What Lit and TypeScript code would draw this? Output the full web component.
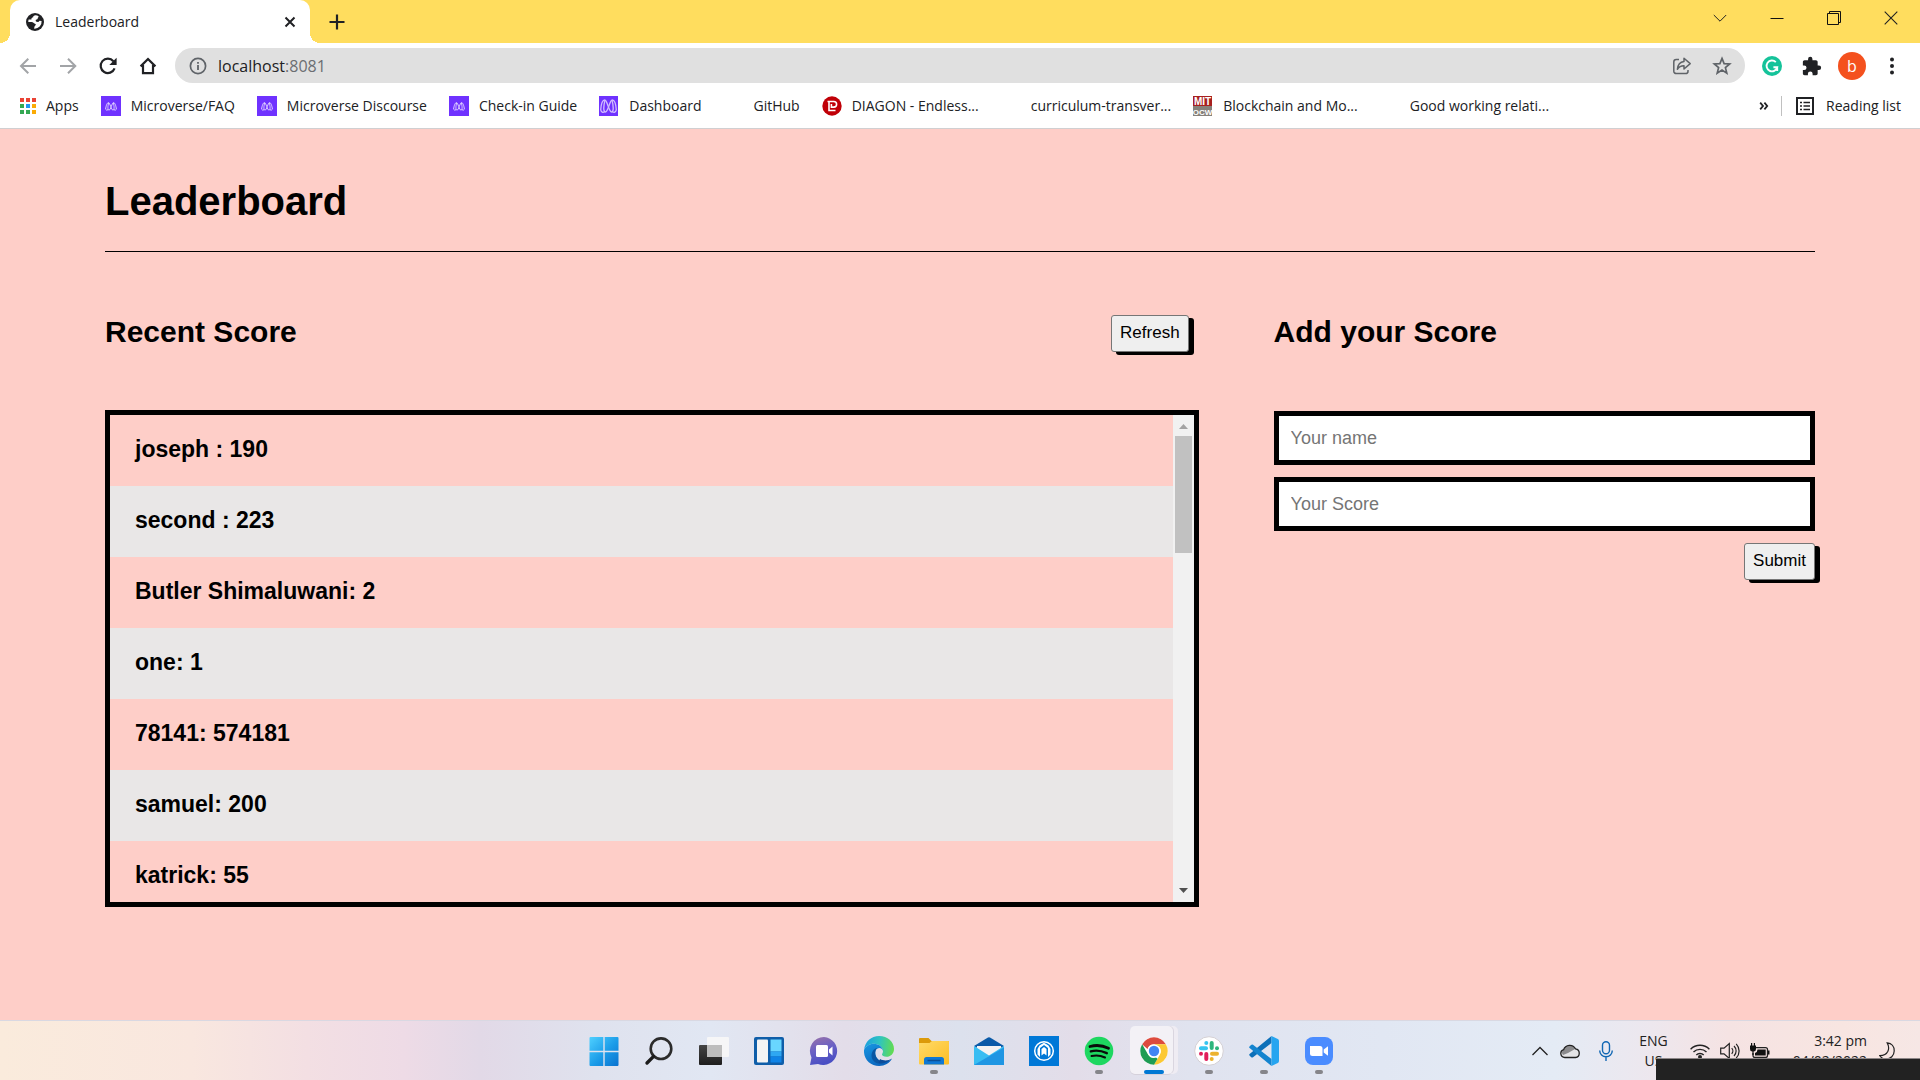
import { LitElement, html, css, svg, nothing, TemplateResult } from "lit";
import { customElement } from "lit/decorators.js";
import { classMap } from "lit/directives/class-map.js";

const icon = (w: number, h: number, box: string, body: unknown) =>
  html`<svg width=${w} height=${h} viewBox=${box} fill="none" aria-hidden="true">${body}</svg>`;

/* ---------- browser glyphs ---------- */

const globe = icon(18, 18, "0 0 18 18", svg`
  <circle cx="9" cy="9" r="9" fill="#202124"/>
  <path d="M9.6 2.2 C8 2.3 6.9 3.2 7.2 4.3 C6 4.4 5.3 5.3 5.4 6.5 L2.6 6.6 A7 7 0 0 0 2.3 8.9 L5.6 9 C7.4 9.1 7.6 10.4 8.9 10.7 C10 10.9 10.1 11.9 9.3 12.5 C8.5 13 8.3 14 8.2 15.7 A7 7 0 0 0 15.6 8 L13.4 7.7 C12.9 9 11.8 9.1 10.6 8.8 C9.7 8.5 9.5 7.6 9.9 6.8 C11.2 6.8 11.9 6 11.8 4.8 C12.2 4.4 12.6 3.9 12.6 3.2 A7 7 0 0 0 9.6 2.2Z" fill="#fff"/>`);
const closeTab = icon(12, 12, "0 0 12 12", svg`<path d="M1.5 1.5 10.5 10.5M10.5 1.5 1.5 10.5" stroke="#202124" stroke-width="2"/>`);
const plus = icon(16, 16, "0 0 16 16", svg`<path d="M8 .5V15.5M.5 8H15.5" stroke="#202124" stroke-width="2.2"/>`);
const chevronDown = icon(14, 14, "0 0 14 14", svg`<path d="M.8 4 7 10.2 13.2 4" stroke="#222" stroke-width="1"/>`);
const minimise = icon(14, 14, "0 0 14 14", svg`<path d="M.5 7.5H13.5" stroke="#111"/>`);
const restore = icon(14, 14, "0 0 14 14", svg`<path d="M.5 2.5H11.5V13.5H.5ZM2.5 2.5V.5H13.5V11.5H11.5" stroke="#111"/>`);
const closeWin = icon(14, 14, "0 0 14 14", svg`<path d="M.7.7 13.3 13.3M13.3.7.7 13.3" stroke="#222" stroke-width="1.1"/>`);

const back = icon(20, 20, "0 0 20 20", svg`<path d="M18 10H3.5M10.3 2.8 3 10 10.3 17.2" stroke="#a2a4a7" stroke-width="2"/>`);
const forward = icon(20, 20, "0 0 20 20", svg`<path d="M2 10H17M10 2.8 17.3 10 10 17.2" stroke="#a2a4a7" stroke-width="2"/>`);
const reload = icon(20, 20, "0 0 20 20", svg`<path d="M16.6 12.4A7.2 7.2 0 1 1 15.4 5.2" stroke="#202124" stroke-width="2.2"/><path d="M18.6 1.7V9H11.3Z" fill="#202124"/>`);
const home = icon(20, 20, "0 0 20 20", svg`<path d="M2.6 10.4 10 3 17.4 10.4M5 9V17.2H15V9" stroke="#202124" stroke-width="2.2"/>`);
const info = icon(18, 18, "0 0 18 18", svg`<circle cx="9" cy="9" r="7.6" stroke="#5f6368" stroke-width="1.7"/><path d="M9 8V13M9 5V6.8" stroke="#5f6368" stroke-width="1.8"/>`);
const share = icon(20, 20, "0 0 20 20", svg`<g stroke="#5f6368" stroke-width="1.5" stroke-linejoin="round"><path d="M7 3.6H4.2A2.4 2.4 0 0 0 1.8 6V15.2A2.4 2.4 0 0 0 4.2 17.6H13.6A2.4 2.4 0 0 0 16 15.2V14"/><path d="M12 2.2 18.2 7.6 12 13V9.8C9 9.7 7.2 10.6 5.4 13.2 5.8 8.6 8 5.8 12 5.4Z"/></g>`);
const star = icon(20, 20, "0 0 20 20", svg`<path d="M10 2.4 12.1 7.6 17.7 8 13.4 11.6 14.8 17.1 10 14.1 5.2 17.1 6.6 11.6 2.3 8 7.9 7.6Z" stroke="#5f6368" stroke-width="1.7"/>`);
const grammarly = icon(20, 20, "0 0 20 20", svg`<circle cx="10" cy="10" r="10" fill="#15c39a"/><path d="M13.8 6.1A5.4 5.4 0 1 0 15.2 11.3H11.4M15.2 15V11.3" stroke="#fff" stroke-width="1.9"/>`);
const puzzle = icon(20, 20, "1 0 23 23" , svg`<path fill="#202124" d="M20.5 11H19V7c0-1.1-.9-2-2-2h-4V3.5a2.5 2.5 0 0 0-5 0V5H4c-1.100 0-2 .9-2 2v3.800h1.500a2.700 2.700 0 0 1 0 5.400H2V20c0 1.100.9 2 2 2h3.800v-1.500a2.700 2.700 0 0 1 5.400 0V22H17c1.100 0 2-.9 2-2v-4h1.500a2.500 2.500 0 0 0 0-5z"/>`);
const dots = icon(20, 20, "0 0 20 20", svg`<g fill="#202124"><circle cx="10" cy="3.600" r="2"/><circle cx="10" cy="10" r="2"/><circle cx="10" cy="16.400" r="2"/></g>`);
const readingList = icon(18, 18, "0 0 18 18", svg`<path d="M1 1H17V17H1Z" stroke="#202124" stroke-width="2"/><path d="M4 5.500H6M7.500 5.500H14M4 9H6M7.500 9H14M4 12.500H6M7.500 12.500H14" stroke="#202124" stroke-width="1.500"/>`);
const more = icon(10, 10, "0 0 10 10", svg`<path d="M1.200 1.600 4 5 1.200 8.400M5.400 1.600 8.200 5 5.400 8.400" stroke="#202124" stroke-width="1.800"/>`);

const microverse = icon(20, 20, "0 0 20 20", svg`<path d="M0 0H20V20H0Z" fill="#6f32ff"/><g stroke="#e6dbff" stroke-width=".9" stroke-linejoin="round"><path d="M4.600 13.200C5 10 6 6.600 7.500 6.600 9 6.600 10.300 14.200 12 14.200 13.500 14.200 13.300 10 12.300 6.900"/><path d="M15.400 13.200C15 10 14 6.600 12.500 6.600 11 6.600 9.700 14.200 8 14.200 6.500 14.200 6.700 10 7.700 6.900"/><path d="M4.600 13.200Q5.600 15 7.200 13.600M15.400 13.200Q14.400 15 12.800 13.600"/></g>`);
const microverseBig = icon(20, 20, "0 0 20 20", svg`<path d="M0 0H19V20H0Z" fill="#6f32ff"/><g stroke="#d3bfff" stroke-width="1.300" stroke-linejoin="round"><path d="M1.700 14C2 9 3.500 4 5.800 4 8.300 4 9.800 16 12.600 16 15 16 14.400 9 13 4.400"/><path d="M17.300 14C17 9 15.500 4 13.200 4 10.700 4 9.200 16 6.400 16 4 16 4.600 9 6 4.400"/><path d="M1.700 14Q3 17.500 5.600 15.700M17.300 14Q16 17.500 13.400 15.700"/></g>`);
const diagon = icon(20, 20, "0 0 20 20", svg`<circle cx="10" cy="10" r="9.700" fill="#c00007"/><path d="M5.500 5.500H11.800A2.800 2.800 0 0 1 11.800 11.100H9.400V8M7 6V14.500H13.500" stroke="#fff" stroke-width="1.600"/>`);
const mit = html`<svg width="20" height="20" viewBox="0 0 20 20" aria-hidden="true">
  <path d="M0 0H19V10H0Z" fill="#a8201f"/><path d="M0 10H19V20H0Z" fill="#86817b"/>
  <text x="9.500" y="8.500" text-anchor="middle" font-family="Liberation Sans, sans-serif" font-weight="700" font-size="10" fill="#fff">MIT</text>
  <text x="9.500" y="18.500" text-anchor="middle" font-family="Liberation Sans, sans-serif" font-weight="700" font-size="8" fill="#fff">OCW</text></svg>`;
const appsGrid = icon(16, 16, "0 0 16 16", svg`
  <path d="M0 0h4v4H0zM6 0h4v4H6zM12 0h4v4h-4z" fill="#ea4335"/>
  <path d="M0 6h4v4H0zM0 12h4v4H0zM6 12h4v4H6z" fill="#34a853"/><path d="M6 6h4v4H6z" fill="#2196f3"/>
  <path d="M12 6h4v4h-4zM12 12h4v4h-4z" fill="#fbab05"/>`);

/* ---------- taskbar glyphs ---------- */

const winStart = icon(30, 30, "0 0 30 30", svg`<defs><linearGradient id="g" x1="0" y1="0" x2="1" y2="1"><stop stop-color="#4fd0ff"/><stop offset=".55" stop-color="#1a9be8"/><stop offset="1" stop-color="#0a72cf"/></linearGradient></defs>
  <path d="M.500 2Q.500 1 1.500 1H14.300V14.800H.500ZM15.700 1H28.500Q29.500 1 29.500 2V14.800H15.700ZM.500 16.200H14.300V30H1.500Q.500 30 .500 29ZM15.700 16.200H29.500V29Q29.500 30 28.500 30H15.700Z" fill="url(#g)"/>`);
const search = icon(30, 30, "0 0 30 30", svg`<circle cx="17" cy="12.700" r="10.300" stroke="#2b2b2b" stroke-width="2.600"/><path d="M9.600 20.400 3 27" stroke="#1c1c1c" stroke-width="3.400" stroke-linecap="round"/>`);
const taskView = icon(30, 30, "0 0 30 30", svg`<defs><linearGradient id="d" x1="0" y1="0" x2="0" y2="1"><stop stop-color="#444"/><stop offset="1" stop-color="#1e1e1e"/></linearGradient></defs><rect x="0" y="9" width="23" height="20" rx="1" fill="url(#d)"/><rect x="8" y="1" width="22" height="20" rx="1" fill="#f7f7f7" opacity=".95"/><path d="M8 9H23V21H8Z" fill="#bdbdbd"/>`);
const widgets = icon(30, 30, "0 0 30 30", svg`<rect x="0" y="1" width="30" height="28" rx="2" fill="#0f5ea9"/><rect x="3" y="3.500" width="11" height="23" rx="1" fill="#f4f4f4"/><path d="M16.500 3.500H27.500V15.500H16.500Z" fill="#69d6ff"/><path d="M16.500 15.500H27.500V20.500H16.500Z" fill="#2ea7f2"/><path d="M16.500 20.500H27.500V26.500H16.500Z" fill="#0f83e6"/>`);
const chat = icon(30, 30, "0 0 30 30", svg`<defs><linearGradient id="c" x1="0" y1="0" x2=".300" y2="1"><stop stop-color="#9a72a8"/><stop offset=".500" stop-color="#6b62c4"/><stop offset="1" stop-color="#4a4fc4"/></linearGradient></defs><path d="M15 1A14 14 0 1 1 9 28L1 29 2.500 21.500A14 14 0 0 1 15 1Z" fill="url(#c)"/><rect x="7" y="9" width="12" height="12" rx="1.500" fill="#fff"/><path d="M20 13.500 23.500 10.500V19.500L20 16.500Z" fill="#fff"/>`);
const edge = icon(30, 30, "0 0 30 30", svg`<defs><linearGradient id="a" x1="0" y1=".400" x2="1" y2=".500"><stop stop-color="#1a9fe0"/><stop offset=".500" stop-color="#2fc4c0"/><stop offset="1" stop-color="#63dc4f"/></linearGradient><linearGradient id="b" x1="0" y1="0" x2=".600" y2="1"><stop stop-color="#1897e2"/><stop offset="1" stop-color="#0a64bd"/></linearGradient></defs>
  <path d="M0 14C1 5.500 7.200 0 15.200 0 23.600 0 30 5.800 30 13 30 17.800 26.500 20.800 22.500 20.800 19.600 20.800 18 19.700 18 18.500 18 17.600 19 17.200 19 15 19 11.500 15 7.800 10 7.800 5.500 7.800 1.800 10.200 0 14Z" fill="url(#a)"/>
  <path d="M0 14C1.500 10.400 5.400 7.800 10 7.800 15 7.800 19 11.500 19 15 18.500 13.200 17 12 15.200 12 12.800 12 11.200 14 11.200 16.800 11.200 22.500 16 26.500 22 25.500 24.500 25.100 26.500 24 28 22.800 25.500 27.300 20.700 30 15.200 30 6.500 30 -.600 23.300 0 14Z" fill="url(#b)"/>
  <path d="M11.200 16.800C11.200 22.500 16 26.500 22 25.500 18.500 28.500 13.500 28.500 10.200 25.500 6 21.500 7 15 11.500 12.500 13 12 14 12 15.200 12 12.800 12 11.200 14 11.200 16.800Z" fill="#0b57a3"/>
  <path d="M14.500 27C19 28 23 27 28 22.500 24.500 24.700 20 25.300 16 23Z" fill="#0c4c9a"/>`);
const explorer = icon(30, 30, "0 0 30 30", svg`<defs><linearGradient id="f" x1="0" y1="0" x2="1" y2="1"><stop stop-color="#ffda69"/><stop offset="1" stop-color="#fdbe22"/></linearGradient></defs><path d="M0 3Q0 2 1 2H9.500L12.500 5H29Q30 5 30 6V12H0Z" fill="#dc9a0a"/><path d="M0 7H10.500L13 5H29Q30 5 30 6V27.500Q30 28.500 29 28.500H1Q0 28.500 0 27.500Z" fill="url(#f)"/><path d="M5 28.500V23.500Q5 21 7.500 21H22.500Q25 21 25 23.500V28.500Z" fill="#0f78d4"/><path d="M8.500 24.500H21.500" stroke="#0b4f96" stroke-width="1.500"/>`);
const mail = icon(30, 30, "0 0 30 30", svg`<path d="M0 10 14 1.500Q15 1 16 1.500L30 10 15 19Z" fill="#0a5aa8"/><path d="M3 10H27V19H3Z" fill="#f3f3f3"/><path d="M0 10 15 19.500 30 10V29H0Z" fill="#38bdf2"/><path d="M0 29 30 11.500V29Z" fill="#1f96e3"/>`);
const vpn = icon(30, 30, "0 0 30 30", svg`<path d="M0 0H30V30H0Z" fill="#0078d7"/><circle cx="15" cy="15" r="9.300" stroke="#fff" stroke-width="1.500"/><path d="M15 6.800 10.500 9.500 8.500 13V18.500L11 21V12L15 9 19 12V21L21.500 18.500V13L19.500 9.500Z" fill="#fff"/><path d="M12.500 13 15 11 17.500 13V19.500L15 17.500 12.500 19.500Z" fill="#fff"/>`);
const spotify = icon(30, 30, "0 0 30 30", svg`<circle cx="15" cy="15" r="14.300" fill="#1ed760"/><g stroke="#0a0a0a" stroke-linecap="round"><path d="M6 10.500C12 8.800 19 9.500 24.500 12.300" stroke-width="2.800"/><path d="M6.800 15.400C12 14 17.500 14.700 22.800 17.200" stroke-width="2.400"/><path d="M7.500 20C12 18.900 16.500 19.300 21 21.500" stroke-width="2"/></g>`);
const chrome = icon(30, 30, "0 0 30 30", svg`<circle cx="15" cy="15" r="13.700" fill="#fff"/>
  <path d="M3.140 8.150A13.700 13.700 0 0 1 26.860 8.150H15A6.850 6.850 0 0 0 8.500 13Z" fill="#dd4b3e"/>
  <path d="M26.860 8.150A13.700 13.700 0 0 1 15 28.700L20.930 18.430A6.850 6.850 0 0 0 20.500 10.900L15 8.150Z" fill="#fcc934"/>
  <path d="M15 28.700A13.700 13.700 0 0 1 3.140 8.150L9.070 18.430A6.850 6.850 0 0 0 17 21.600L18.500 22.700Z" fill="#1e9c54"/>
  <circle cx="15" cy="15" r="6.600" fill="#fff"/><circle cx="15" cy="15" r="5.200" fill="#4285f4"/>`);
const slack = icon(30, 30, "0 0 30 30", svg`<circle cx="15" cy="15" r="14.300" fill="#fff" stroke="#d4d0d4"/><g stroke-width="4" stroke-linecap="round"><path d="M7 12.300H12" stroke="#36c5f0"/><path d="M17.700 7V12" stroke="#2eb67d"/><path d="M18 17.700H23" stroke="#ecb22e"/><path d="M12.300 18V23" stroke="#e01e5a"/></g><circle cx="12.300" cy="6.900" r="2" fill="#36c5f0"/><circle cx="23" cy="12.300" r="2" fill="#2eb67d"/><circle cx="17.700" cy="23.100" r="2" fill="#ecb22e"/><circle cx="7" cy="17.700" r="2" fill="#e01e5a"/>`);
const vscode = icon(30, 30, "0 0 30 30", svg`<path d="M22.500 7 4 21.300Q3 22 2 21L.500 19.600Q-.200 18.800.600 18L22.500 0Z" fill="#0d70b9"/><path d="M22.500 23 4 8.700Q3 8 2 9L.500 10.400Q-.200 11.200.600 12L22.500 30Z" fill="#1484cf"/><path d="M22.500 0 28.800 3Q30 3.600 30 5V25Q30 26.400 28.800 27L22.500 30Z" fill="#26a5f0"/>`);
const zoomApp = icon(30, 30, "0 0 30 30", svg`<rect x="1" y="1" width="28" height="28" rx="8" fill="#4a8cff"/><path d="M6 10H16Q18.500 10 18.500 12.500V20H8.500Q6 20 6 17.500Z" fill="#fff"/><path d="M19.700 13.500 24 10.200V19.800L19.700 16.500Z" fill="#fff"/>`);

const chevronUp = icon(16, 16, "0 0 16 16", svg`<path d="M.500 12 8 4.500 15.500 12" stroke="#222" stroke-width="1.300"/>`);
const cloud = icon(20, 16, "0 0 20 16", svg`<path d="M5 14.500A4 4 0 0 1 3.600 6.700 6.500 6.500 0 0 1 15.500 5.800 4.400 4.400 0 0 1 15.500 14.500Z" fill="#e4e4e6"/><path d="M3.600 6.700A6.500 6.500 0 0 1 15.500 5.800L8 10 3 12Q.500 8.500 3.600 6.700Z" fill="#8b8b8d"/><path d="M5 14.500A4 4 0 0 1 3.600 6.700 6.500 6.500 0 0 1 15.500 5.800 4.400 4.400 0 0 1 15.500 14.500Z" stroke="#222" stroke-width="1.300"/>`);
const mic = icon(14, 20, "0 0 14 20", svg`<g stroke="#1167b4" stroke-width="1.400"><rect x="3.500" y=".700" width="7" height="12" rx="3.500"/><path d="M.700 9.500A6.300 6.300 0 0 0 13.300 9.500M7 16V20"/></g>`);
const wifi = icon(20, 16, "0 0 20 16", svg`<g stroke="#222" stroke-width="1.400"><path d="M.600 6.200A13.300 13.300 0 0 1 19.400 6.200M3.500 9.100A9.200 9.200 0 0 1 16.500 9.100M6.300 12A5.200 5.200 0 0 1 13.700 12"/></g><circle cx="10" cy="14" r="2" fill="#222"/>`);
const speaker = icon(20, 18, "0 0 20 18", svg`<g stroke="#222" stroke-width="1.200"><path d="M.700 6.200H4L9.300 1.500V16.500L4 11.800H.700Z"/><path d="M11.700 6.200A4 4 0 0 1 11.700 11.800M14 4A7 7 0 0 1 14 14M16.200 1.800A10.400 10.400 0 0 1 16.200 16.200"/></g>`);
const battery = icon(20, 16, "0 0 20 16", svg`<path d="M6 4.600H15.500Q17.500 4.600 17.500 6.500V12.500Q17.500 14.400 15.500 14.400H5Q3 14.400 3 12.500V10" stroke="#222" stroke-width="1.300"/><path d="M7.500 6.500H15.700V12.500H5V10Q7.500 9 7.500 6.500ZM18 7.500H19.500V11.500H18Z" fill="#111"/><path d="M0 2.500H6V6Q6 8.500 3.600 8.500V12H2.400V8.500Q0 8.500 0 6ZM1 0H2.200V3H1ZM3.800 0H5V3H3.800Z" fill="#111"/>`);
const moon = icon(16, 18, "0 0 16 18", svg`<path d="M8.200.900C12.700 1.300 15.300 4.700 15.200 9 15.100 13.600 11.600 17.100 7.200 17.100 4.400 17.100 2.100 15.800.800 13.700 4.400 13.700 7.400 12.500 8.900 9.300 10 6.800 9.700 3.600 8.200.900Z" stroke="#222" stroke-width="1.200"/>`);

/* ---------- data ---------- */

interface Bookmark { name: string; icon: TemplateResult | typeof nothing; }
const BOOKMARKS: Bookmark[] = [
  { name: "Microverse/FAQ", icon: microverse },
  { name: "Microverse Discourse", icon: microverse },
  { name: "Check-in Guide", icon: microverse },
  { name: "Dashboard", icon: microverseBig },
  { name: "GitHub", icon: nothing },
  { name: "DIAGON - Endless...", icon: diagon },
  { name: "curriculum-transver...", icon: nothing },
  { name: "Blockchain and Mo...", icon: mit },
  { name: "Good working relati...", icon: nothing },
];

const SCORES = ["joseph : 190", "second : 223", "Butler Shimaluwani: 2", "one: 1", "78141: 574181", "samuel: 200", "katrick: 55"];

interface App { name: string; icon: TemplateResult; running?: boolean; active?: boolean; }
const APPS: App[] = [
  { name: "Start", icon: winStart },
  { name: "Search", icon: search },
  { name: "Task View", icon: taskView },
  { name: "Widgets", icon: widgets },
  { name: "Chat", icon: chat },
  { name: "Edge", icon: edge },
  { name: "File Explorer", icon: explorer, running: true },
  { name: "Mail", icon: mail },
  { name: "VPN", icon: vpn },
  { name: "Spotify", icon: spotify, running: true },
  { name: "Chrome", icon: chrome, active: true },
  { name: "Slack", icon: slack, running: true },
  { name: "Visual Studio Code", icon: vscode, running: true },
  { name: "Zoom", icon: zoomApp, running: true },
];

const reset = css`
  * { box-sizing: border-box; }
  svg { display: block; flex: none; }
  .bare { display: flex; align-items: center; justify-content: center; padding: 0; border: 0; background: none; font: inherit; color: inherit; }
`;

@customElement("browser-chrome")
export class BrowserChrome extends LitElement {
  static styles = [reset, css`
    :host { display: block; font: 14px/20px "Open Sans", "Noto Sans", sans-serif; color: #202124; background: #fff; }
    .strip { display: flex; height: 43px; background: #ffdd5e; padding: 0 1px 0 10px; }
    .tab { position: relative; display: flex; align-items: center; width: 300px; padding: 0 14px 0 16px; background: #fff; border-radius: 10px 10px 0 0; }
    .tab::before, .tab::after { content: ""; position: absolute; bottom: 0; width: 10px; height: 10px; }
    .tab::before { left: -10px; background: radial-gradient(circle at 0 0, transparent 10px, #fff 10px); }
    .tab::after { right: -10px; background: radial-gradient(circle at 100% 0, transparent 10px, #fff 10px); }
    .title { flex: 1; margin-left: 11px; }
    .new { width: 54px; }
    .controls { display: flex; margin-left: auto; height: 36px; }
    .controls .bare { width: 57px; }
    .tools { display: flex; align-items: center; height: 45px; padding: 0 18px; }
    .nav { display: flex; gap: 20px; margin-right: 17px; }
    .omni { flex: 1; display: flex; align-items: center; height: 35px; padding: 0 13px 0 14px; border-radius: 18px; background: #e0e0e0; }
    .url { flex: 1; margin-left: 11px; font-size: 16px; }
    .port { color: #6b6e72; }
    .actions { display: flex; gap: 20px; }
    .ext { display: flex; align-items: center; gap: 16px; margin-left: 17px; }
    .plugins { display: flex; gap: 20px; }
    .avatar { width: 28px; height: 28px; border-radius: 50%; background: #f4511e; color: #fff; font-size: 16px; }
    .marks { display: flex; align-items: center; height: 41px; padding: 0 19px 4px 20px; border-bottom: 1px solid #d0cfd1; white-space: nowrap; }
    .mark { display: flex; align-items: center; gap: 10px; margin-right: 22px; color: inherit; text-decoration: none; }
    .blank { width: 20px; }
    .end { display: flex; align-items: center; gap: 12px; margin-left: auto; }
    .rule { width: 1px; height: 20px; background: #c0c0c0; margin-right: 2px; }
  `];

  render() {
    return html`
      <div class="strip">
        <div class="tab">${globe}<span class="title">Leaderboard</span><button class="bare" aria-label="Close tab">${closeTab}</button></div>
        <button class="bare new" aria-label="New tab">${plus}</button>
        <div class="controls">
          <button class="bare" aria-label="Search tabs">${chevronDown}</button>
          <button class="bare" aria-label="Minimise">${minimise}</button>
          <button class="bare" aria-label="Restore">${restore}</button>
          <button class="bare" aria-label="Close">${closeWin}</button>
        </div>
      </div>
      <div class="tools">
        <div class="nav">
          <button class="bare" aria-label="Back">${back}</button>
          <button class="bare" aria-label="Forward">${forward}</button>
          <button class="bare" aria-label="Reload">${reload}</button>
          <button class="bare" aria-label="Home">${home}</button>
        </div>
        <div class="omni">
          ${info}<span class="url">localhost<span class="port">:8081</span></span>
          <div class="actions">
            <button class="bare" aria-label="Share">${share}</button>
            <button class="bare" aria-label="Bookmark">${star}</button>
          </div>
        </div>
        <div class="ext">
          <div class="plugins">
            <button class="bare" aria-label="Grammarly">${grammarly}</button>
            <button class="bare" aria-label="Extensions">${puzzle}</button>
          </div>
          <button class="bare avatar" aria-label="Profile">b</button>
          <button class="bare" aria-label="Menu">${dots}</button>
        </div>
      </div>
      <nav class="marks">
        <a class="mark" href="#">${appsGrid}<span>Apps</span></a>
        ${BOOKMARKS.map((b) => html`<a class="mark" href="#">${b.icon === nothing ? html`<span class="blank"></span>` : b.icon}<span>${b.name}</span></a>`)}
        <div class="end">
          <button class="bare" aria-label="More bookmarks">${more}</button>
          <span class="rule"></span>
          ${readingList}<span>Reading list</span>
        </div>
      </nav>`;
  }
}

@customElement("leader-board")
export class LeaderBoard extends LitElement {
  static styles = [reset, css`
    :host { display: block; padding: 49px 105px 0; background: #fecec8; color: #000; font-family: "Liberation Sans", Arial, sans-serif; }
    h1, h2 { margin: 0; }
    h1 { padding-bottom: 27px; border-bottom: 1px solid #000; font-size: 40px; line-height: 46px; }
    h2 { font-size: 30px; line-height: 34px; }
    .columns { display: grid; grid-template-columns: 101fr 50fr; gap: 75px; padding-top: 63px; }
    .head { display: flex; justify-content: space-between; align-items: flex-start; height: 37px; padding-right: 10px; margin-bottom: 58px; }
    .btn { height: 37px; padding: 0 8px 2px; border: 1px solid #767676; border-radius: 3px; background: #efefef; color: #000; box-shadow: 5px 3px 0 #000; font: 17px/20px "Liberation Sans", Arial, sans-serif; }
    .board { display: flex; height: 497px; border: 5px solid #000; }
    .list { flex: 1; margin: 0; padding: 0; list-style: none; overflow: hidden; }
    .row { padding: 21px 25px 23px; font-size: 23px; line-height: 27px; font-weight: 700; }
    .row:nth-child(even) { background: #e9e7e7; }
    .bar { display: flex; flex-direction: column; align-items: center; width: 21px; padding: 9px 2px; background: #f1f1f1; }
    .thumb { width: 17px; height: 117px; margin-top: 7px; background: #c1c1c1; }
    .down { margin-top: auto; }
    .form { display: flex; flex-direction: column; gap: 12px; padding-top: 1px; }
    .field { width: 100%; height: 54px; padding: 0 12px; border: 5px solid #000; border-radius: 0; outline: 0; background: #fff; font: 18px/24px "Liberation Sans", Arial, sans-serif; }
    .field::placeholder { color: #757575; opacity: 1; }
    .form .btn { align-self: flex-end; }
  `];

  render() {
    return html`
      <h1>Leaderboard</h1>
      <div class="columns">
        <section>
          <div class="head"><h2>Recent Score</h2><button class="btn">Refresh</button></div>
          <div class="board">
            <ul class="list">${SCORES.map((s) => html`<li class="row">${s}</li>`)}</ul>
            <div class="bar">
              ${icon(9, 5, "0 0 9 5", svg`<path d="M0 5 4.500 0 9 5Z" fill="#a3a3a3"/>`)}
              <div class="thumb"></div>
              <div class="down">${icon(9, 5, "0 0 9 5", svg`<path d="M0 0 4.500 5 9 0Z" fill="#505050"/>`)}</div>
            </div>
          </div>
        </section>
        <section>
          <div class="head"><h2>Add your Score</h2></div>
          <form class="form" @submit=${(e: Event) => e.preventDefault()}>
            <input class="field" type="text" placeholder="Your name" aria-label="Your name">
            <input class="field" type="text" placeholder="Your Score" aria-label="Your Score">
            <button class="btn" type="submit">Submit</button>
          </form>
        </section>
      </div>`;
  }
}

@customElement("task-bar")
export class TaskBar extends LitElement {
  static styles = [reset, css`
    :host { box-sizing: border-box; position: relative; display: grid; grid-template-columns: 1fr auto 1fr; height: 60px; overflow: hidden; color: #222; font: 14px/20px "Open Sans", "Noto Sans", sans-serif;
      border-top: 1px solid #d9d8e2;
      background: linear-gradient(90deg, #faebdc 0%, #f9e7df 10%, #f3dfe3 16%, #eedbe6 21%, #e2d9e7 25%, #dfe2ee 31%, #e1e7f3 37%, #e3dde9 44%, #dce1ed 50%, #e3dde9 56%, #e0e3ef 62%, #e1e7f3 72%, #e4ebf5 81%, #ede7ee 86%, #f5e3e3 90%, #f8e5e1 96%, #f6e7e5 100%); }
    .apps { display: flex; grid-column: 2; padding-left: 2px; }
    .app { position: relative; width: 55px; height: 59px; }
    .app svg { position: relative; }
    .app.running::after, .app.active::after { content: ""; position: absolute; left: 50%; bottom: 6px; width: 8px; height: 4px; margin-left: -4px; border-radius: 2px; background: #85858a; }
    .app.active::after { width: 20px; margin-left: -10px; background: #0078d4; }
    .app.active::before { content: ""; position: absolute; top: 5px; left: 4px; width: 43px; height: 48px; border-radius: 5px; background: #f3f1f6; box-shadow: 1px 0 0 #dad6e0, 5px 0 0 #efecf3, 0 1px 0 #d5d1db; }
    .tray { display: flex; justify-content: flex-end; align-items: center; padding-right: 25px; }
    .cloud { margin: 0 19px 0 12px; }
    .lang { margin: 0 22px 0 26px; text-align: center; }
    .status { display: flex; align-items: center; gap: 10px; }
    .clock { margin: 0 12px 0 23px; text-align: right; }
    .cover { position: absolute; right: 0; bottom: 0; width: 264px; height: 21px; background: #222; box-shadow: 0 -1px 0 #8d8788; }
  `];

  render() {
    return html`
      <div class="apps">
        ${APPS.map((a) => html`<button aria-label=${a.name} class=${classMap({ bare: true, app: true, running: !!a.running, active: !!a.active })}>${a.icon}</button>`)}
      </div>
      <div class="tray">
        ${chevronUp}<span class="cloud">${cloud}</span>${mic}
        <div class="lang">ENG<br>US</div>
        <div class="status">${wifi}${speaker}${battery}</div>
        <div class="clock">3:42 pm<br>04/02/2022</div>
        ${moon}
      </div>
      <div class="cover"></div>`;
  }
}

@customElement("app-root")
export class AppRoot extends LitElement {
  static styles = css`
    :host { display: flex; flex-direction: column; min-height: 100vh; }
    leader-board { flex: 1; }
  `;

  render() {
    return html`<browser-chrome></browser-chrome><leader-board></leader-board><task-bar></task-bar>`;
  }
}
